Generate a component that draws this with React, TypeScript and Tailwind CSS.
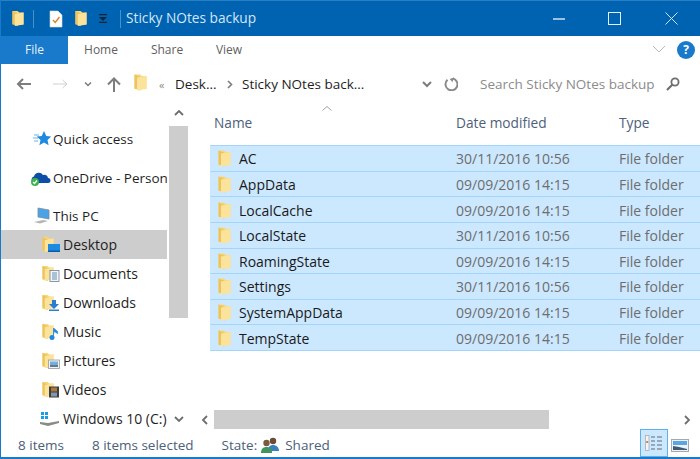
import React from 'react';

const Folder = ({ className = 'w-[13px] h-[17px]' }: { className?: string }) => (
  <svg viewBox="0 0 13 17" className={className}>
    <path d="M0.500 0.500h5.500l2 1.500h4.500v13H0.500z" fill="#f8d775" />
    <path d="M0.500 0.500l6 2.500v13.500l-6-2z" fill="#ecc35c" />
    <path d="M3 3.500l9.500-1.500v13l-9.500 1.500z" fill="#fce39b" />
  </svg>
);

// folder with a small badge in front of it, used in the nav tree
const NavFolder = ({ children }: { children?: React.ReactNode }) => (
  <span className="relative inline-block w-[19px] h-[17px] shrink-0">
    <Folder className="w-[12px] h-[17px]" />
    <svg viewBox="0 0 12 12" className="absolute left-[6px] top-[5px] w-[12px] h-[12px]">
      {children}
    </svg>
  </span>
);

const files = [
  ['AC', '30/11/2016 10:56'],
  ['AppData', '09/09/2016 14:15'],
  ['LocalCache', '09/09/2016 14:15'],
  ['LocalState', '30/11/2016 10:56'],
  ['RoamingState', '09/09/2016 14:15'],
  ['Settings', '30/11/2016 10:56'],
  ['SystemAppData', '09/09/2016 14:15'],
  ['TempState', '09/09/2016 14:15'],
];

const TitleBar = () => (
  <div className="h-[36px] shrink-0 bg-[#0063b1] flex items-center text-white border-t border-[#2a7fc2]">
    <Folder className="ml-[11px] w-[12px] h-[17px]" />
    <div className="ml-[9px] w-px h-[18px] bg-[#4a8fc6]" />
    <svg viewBox="0 0 14 18" className="ml-[15px] w-[14px] h-[18px]">
      <path d="M1 1h8l4 4v12H1z" fill="#fff" stroke="#d8d8d8" strokeWidth="0.600" />
      <path d="M4 10l2.200 2.400L10.500 7" fill="none" stroke="#d9822b" strokeWidth="1.400" />
    </svg>
    <Folder className="ml-[12px] w-[12px] h-[17px]" />
    <svg viewBox="0 0 8 9" className="ml-[12px] w-[8px] h-[9px]">
      <path d="M0 0h8v1.200H0zM0 3h8L4 7zM0 7.800h8V9H0z" fill="#10243c" />
    </svg>
    <div className="ml-[13px] w-px h-[18px] bg-[#4a8fc6]" />
    <span className="ml-[5px] text-[13.7px] text-[#d5e6f5] whitespace-nowrap">Sticky NOtes backup</span>
    <div className="ml-auto w-[12px] h-[2px] shrink-0 bg-[#9cc2e2]" />
    <svg viewBox="0 0 13 13" className="ml-[43px] w-[13px] h-[13px]">
      <rect x="0.500" y="0.500" width="12" height="12" fill="none" stroke="#e3eff9" />
    </svg>
    <svg viewBox="0 0 13 13" className="ml-[44px] mr-[22px] w-[13px] h-[13px]">
      <path d="M0.500 0.500l12 12M12.500 0.500l-12 12" stroke="#d3e4f3" strokeWidth="1" />
    </svg>
  </div>
);

const Tabs = () => (
  <div className="h-[28px] shrink-0 flex items-stretch text-[12px] text-[#5f5f5f]">
    <div className="w-[67px] bg-[#1979ca] text-[#e6f1fa] flex items-center justify-center">File</div>
    <div className="w-[66px] flex items-center justify-center">Home</div>
    <div className="w-[66px] flex items-center justify-center">Share</div>
    <div className="w-[58px] flex items-center justify-center">View</div>
    <svg viewBox="0 0 14 8" className="ml-auto mt-[9px] w-[14px] h-[8px]">
      <path d="M1 1l6 6 6-6" fill="none" stroke="#b9b9b9" strokeWidth="1" />
    </svg>
    <div className="ml-[11px] mr-[5px] mt-[5px] w-[18px] h-[18px] rounded-full bg-[#1979ca] text-white text-[12px] font-bold flex items-center justify-center">
      ?
    </div>
  </div>
);

const AddressBar = () => (
  <div className="h-[36px] shrink-0 pt-[4px] flex items-center text-[13.5px] text-[#1e1e1e] whitespace-nowrap">
    <svg viewBox="0 0 16 12" className="ml-[15px] w-[16px] h-[12px] shrink-0">
      <path d="M15 6H2M7 1L2 6l5 5" fill="none" stroke="#7d7d7d" strokeWidth="2" />
    </svg>
    <svg viewBox="0 0 15 10" className="ml-[21px] w-[15px] h-[10px] shrink-0">
      <path d="M0 5h14M9.500 1L14 5l-4.500 4" fill="none" stroke="#d0d0d0" strokeWidth="1" />
    </svg>
    <svg viewBox="0 0 8 5" className="ml-[16px] w-[8px] h-[5px] shrink-0">
      <path d="M1 0.500l3 3 3-3" fill="none" stroke="#7d7d7d" strokeWidth="1.500" />
    </svg>
    <svg viewBox="0 0 14 15" className="ml-[15px] w-[14px] h-[15px] shrink-0">
      <path d="M7 15V2M1 7.500l6-6 6 6" fill="none" stroke="#7d7d7d" strokeWidth="2" />
    </svg>
    <Folder className="ml-[13px] -mt-[4px] w-[13px] h-[17px] shrink-0" />
    <span className="ml-[12px] w-[7px] text-[11px] text-[#8a8a8a] leading-none">«</span>
    <span className="ml-[9px] w-[40px]">Desk...</span>
    <svg viewBox="0 0 6 9" className="ml-[12px] w-[6px] h-[9px] shrink-0">
      <path d="M1 1l3.500 3.500L1 8" fill="none" stroke="#7d7d7d" strokeWidth="1.600" />
    </svg>
    <span className="ml-[9px] w-[123px]">Sticky NOtes back...</span>
    <svg viewBox="0 0 10 7" className="ml-[57px] w-[10px] h-[7px] shrink-0">
      <path d="M1 1l4 4 4-4" fill="none" stroke="#7d7d7d" strokeWidth="2" />
    </svg>
    <svg viewBox="0 0 14 14" className="ml-[12px] w-[14px] h-[14px] shrink-0">
      <path d="M3.500 2.800A6 6 0 1 0 9 1.500" fill="none" stroke="#8a8a8a" strokeWidth="2" />
      <path d="M8 0v5l-3.500-2.500z" fill="#8a8a8a" transform="rotate(15 7 7)" />
    </svg>
    <span className="ml-[22px] w-[176px] text-[#8b8b8b]">Search Sticky NOtes backup</span>
    <svg viewBox="0 0 14 14" className="ml-[10px] w-[14px] h-[14px] shrink-0">
      <circle cx="9" cy="5" r="3.600" fill="none" stroke="#6e6e6e" strokeWidth="1.800" />
      <path d="M6.500 7.500L1 13" stroke="#6e6e6e" strokeWidth="2.200" />
    </svg>
  </div>
);

const NavRow = ({
  icon,
  label,
  indent,
  selected,
  className = '',
}: {
  icon: React.ReactNode;
  label: React.ReactNode;
  indent: string;
  selected?: boolean;
  className?: string;
}) => (
  <div className={`h-[29px] flex items-center whitespace-nowrap overflow-hidden ${indent} ${selected ? 'bg-[#cdcdcd]' : ''} ${className}`}>
    {icon}
    <span className="ml-[2px]">{label}</span>
  </div>
);

const NavPane = () => (
  <div className="w-[187px] shrink-0 flex text-[14px] text-[#1f1f1f]">
    <div className="w-[166px] shrink-0 pt-[24px]">
      <NavRow
        indent="pl-[32px]"
        label={<span className="text-[13.5px]">Quick access</span>}
        icon={
          <svg viewBox="0 0 18 16" className="w-[18px] h-[16px] shrink-0">
            <path d="M11 0l2.300 5 5 .6-3.800 3.400 1.100 5.200L11 11.600 6.400 14.200l1.100-5.200L3.700 5.600l5-.6z" fill="#1d8ae0" />
            <path d="M1 4h5M0 7h5M1 10h4" stroke="#64b4ee" strokeWidth="1" />
          </svg>
        }
      />
      <NavRow
        className="mt-[10px] pl-[29px]"
        indent=""
        label={<span className="text-[13.5px]">OneDrive - Person</span>}
        icon={
          <span className="relative w-[21px] h-[16px] shrink-0">
            <svg viewBox="0 0 21 16" className="w-[21px] h-[16px]">
              <path d="M3 12a3 3 0 0 1 1-5.500A5 5 0 0 1 13 5a3.500 3.500 0 0 1 5 3 2.500 2.500 0 0 1 0 5H4z" fill="#0f4ea8" />
              <circle cx="5" cy="12" r="4" fill="#3cb24a" />
              <path d="M3 12l1.500 1.500L7 10.500" fill="none" stroke="#fff" strokeWidth="1.200" />
            </svg>
          </span>
        }
      />
      <NavRow
        className="mt-[9px] pl-[32px]"
        indent=""
        label={<span className="text-[13.5px]">This PC</span>}
        icon={
          <svg viewBox="0 0 18 17" className="w-[18px] h-[17px] shrink-0">
            <path d="M5 1l11 2v9L5 10z" fill="#4aa3e8" stroke="#7a8b99" strokeWidth="0.800" />
            <path d="M1 15l9-2 5 1-8 2.500z" fill="#b5b5b5" />
          </svg>
        }
      />
      <NavRow
        selected
        indent="pl-[41px]"
        label="Desktop"
        icon={
          <NavFolder>
            <rect x="0" y="3" width="12" height="8" fill="#1b8ae0" />
            <rect x="0" y="9.500" width="12" height="1.500" fill="#0d5aa5" />
          </NavFolder>
        }
      />
      <NavRow
        indent="pl-[41px]"
        label="Documents"
        icon={
          <NavFolder>
            <rect x="2" y="0.500" width="9" height="11" fill="#f5f5f5" stroke="#6f7f8f" strokeWidth="0.800" />
            <path d="M4 3h5M4 5h5M4 7h5M4 9h5" stroke="#4f85b8" strokeWidth="0.900" />
          </NavFolder>
        }
      />
      <NavRow
        indent="pl-[41px]"
        label="Downloads"
        icon={
          <NavFolder>
            <path d="M4 1h4v4h3l-5 5-5-5h3z" fill="#2a7fd0" />
            <rect x="1" y="10.500" width="10" height="1.500" fill="#2a7fd0" />
          </NavFolder>
        }
      />
      <NavRow
        indent="pl-[41px]"
        label="Music"
        icon={
          <NavFolder>
            <circle cx="4" cy="9.500" r="2.500" fill="#1b8ae0" />
            <path d="M5.500 9.500V0l4 3.500v2L6.500 3.500" fill="#1b8ae0" stroke="#1b8ae0" strokeWidth="0.800" />
          </NavFolder>
        }
      />
      <NavRow
        indent="pl-[41px]"
        label="Pictures"
        icon={
          <NavFolder>
            <rect x="0.500" y="3" width="11" height="8.500" fill="#f2f2f2" stroke="#9a9a9a" strokeWidth="0.800" />
            <rect x="2" y="4.500" width="8" height="3" fill="#6fb1e3" />
            <rect x="2" y="7.500" width="8" height="2.500" fill="#5c7d96" />
          </NavFolder>
        }
      />
      <NavRow
        indent="pl-[41px]"
        label="Videos"
        icon={
          <NavFolder>
            <rect x="1" y="0.500" width="10" height="11" fill="#3f3f3f" />
            <rect x="3" y="1.500" width="6" height="4" fill="#a9793f" />
            <rect x="3" y="6.500" width="6" height="4" fill="#7e98ae" />
          </NavFolder>
        }
      />
      <NavRow
        indent="pl-[39px]"
        label="Windows 10 (C:)"
        icon={
          <svg viewBox="0 0 20 15" className="w-[20px] h-[15px] shrink-0 mr-[1px]">
            <path d="M1 1h3v3H1zM5 1h3v3H5zM1 5h3v3H1zM5 5h3v3H5z" fill="#1b9ae8" />
            <path d="M0 11l8 1 11-2v2l-11 3-8-2z" fill="#8a8a8a" />
          </svg>
        }
      />
    </div>
    <div className="ml-[2px] flex-1 flex flex-col items-center">
      <div className="h-[26px] flex items-center">
        <svg viewBox="0 0 10 6" className="w-[10px] h-[6px]">
          <path d="M1 5l4-4 4 4" fill="none" stroke="#6e6e6e" strokeWidth="1.800" />
        </svg>
      </div>
      <div className="w-full h-[192px] bg-[#cdcdcd]" />
      <svg viewBox="0 0 10 6" className="mt-auto mb-[12px] w-[10px] h-[6px]">
        <path d="M1 1l4 4 4-4" fill="none" stroke="#6e6e6e" strokeWidth="1.800" />
      </svg>
    </div>
  </div>
);

const FileList = () => (
  <div className="flex-1 min-w-0 flex flex-col ml-[22px] text-[14px]">
    <div className="relative h-[45px] shrink-0 pt-[1px] flex items-center text-[#4c607a] text-[13.7px]">
      <svg viewBox="0 0 10 5" className="absolute left-[112px] top-[6px] w-[10px] h-[5px]">
        <path d="M0.500 4.500L5 0.500l4.500 4" fill="none" stroke="#a0a0a0" strokeWidth="1" />
      </svg>
      <span className="ml-[4px] w-[242px]">Name</span>
      <span className="w-[163px]">Date modified</span>
      <span>Type</span>
    </div>
    <div className="h-[206px] shrink-0 flex flex-col">
      {files.map(([name, date], i) => (
        <div
          key={name}
          className={`flex-1 pt-[1px] flex items-center bg-[#cce8ff] border-b border-l border-l-[#cce8ff] border-b-[#a3d5fb] whitespace-nowrap overflow-hidden ${i === 0 ? 'border-t border-t-[#a3d5fb] border-l-[#a3d5fb]' : ''}`}
        >
          <Folder className="ml-[7px] w-[13px] h-[17px] shrink-0" />
          <span className="ml-[8px] w-[217px] text-[#1a1a1a]">{name}</span>
          <span className="w-[163px] text-[#6d6d6d]">{date}</span>
          <span className="text-[#6d6d6d]">File folder</span>
        </div>
      ))}
    </div>
    <div className="mt-[59px] h-[19px] shrink-0 flex items-center -ml-[10px]">
      <svg viewBox="0 0 7 10" className="ml-[1px] w-[7px] h-[10px]">
        <path d="M6 1L2 5l4 4" fill="none" stroke="#6e6e6e" strokeWidth="1.800" />
      </svg>
      <div className="ml-[6px] w-[335px] h-full bg-[#cdcdcd]" />
      <svg viewBox="0 0 7 10" className="ml-auto mr-[9px] w-[7px] h-[10px]">
        <path d="M1 1l4 4-4 4" fill="none" stroke="#6e6e6e" strokeWidth="1.800" />
      </svg>
    </div>
  </div>
);

const StatusBar = () => (
  <div className="h-[23px] shrink-0 flex items-center text-[13.5px] text-[#4c607a]">
    <span className="ml-[17px]">8 items</span>
    <span className="ml-[28px]">8 items selected</span>
    <span className="ml-[28px]">State:</span>
    <svg viewBox="0 0 18 17" className="ml-[4px] w-[18px] h-[17px]">
      <circle cx="12" cy="4" r="3.200" fill="#6d4a34" />
      <path d="M7 14c0-4 2-6 5-6s6 2 6 6z" fill="#3a7fc0" />
      <circle cx="5.500" cy="6" r="3.200" fill="#7a5a3e" />
      <path d="M0 16c0-4 2-6 5.500-6s5.500 2 5.500 6z" fill="#3f9560" />
    </svg>
    <span className="ml-[6px]">Shared</span>
    <div className="ml-auto -mt-[5px] w-[28px] h-[28px] shrink-0 bg-[#cce8ff] border border-[#62b0e8] flex items-center justify-center">
      <svg viewBox="0 0 18 16" className="w-[18px] h-[16px]">
        <rect x="0.500" y="0.500" width="3.500" height="15" fill="#f4f4f4" stroke="#9aa5b0" strokeWidth="0.700" />
        <path d="M1.200 6h2v2h-2z" fill="#d9822b" />
        <path d="M6 2h4M12 2h5M6 6h4M12 6h5M6 10h4M12 10h5M6 14h4M12 14h5" stroke="#5f6b78" strokeWidth="1" />
      </svg>
    </div>
    <svg viewBox="0 0 18 13" className="ml-[3px] mr-[11px] w-[18px] h-[13px]">
      <rect x="0.500" y="0.500" width="17" height="12" fill="#eaf3fb" stroke="#a8a8a8" />
      <rect x="2" y="2" width="14" height="4" fill="#5aa6e3" />
      <path d="M2 7l6 1 8 2v1H2z" fill="#3f5a72" />
    </svg>
  </div>
);

export default function App() {
  return (
    <div
      className="w-[700px] h-[459px] bg-white overflow-hidden flex flex-col border-l border-b-2 border-[#1979ca]"
      style={{ fontFamily: '"Open Sans", "Noto Sans", sans-serif' }}
    >
      <TitleBar />
      <Tabs />
      <AddressBar />
      <div className="h-[334px] shrink-0 flex">
        <NavPane />
        <FileList />
      </div>
      <StatusBar />
    </div>
  );
}
